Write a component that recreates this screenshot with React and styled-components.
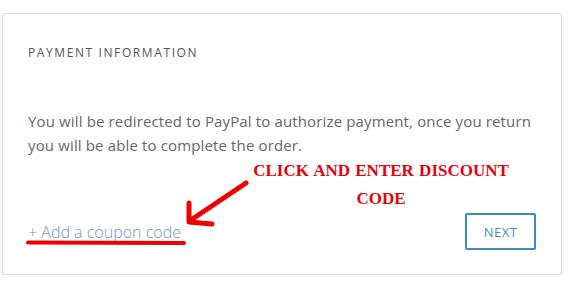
import styled, { createGlobalStyle } from 'styled-components';

const GlobalStyle = createGlobalStyle`
  html, body {
    margin: 0;
    padding: 0;
    background: #ffffff;
  }
  body {
    padding: 13px 0 0 2px;
    font-family: "Open Sans", "Liberation Sans", sans-serif;
  }
`;

const Card = styled.section`
  position: relative;
  box-sizing: border-box;
  width: 560px;
  height: 262px;
  display: flex;
  flex-direction: column;
  padding: 30px 24px 24px 25px;
  background: #fff;
  border: 1px solid #dedede;
  border-radius: 3px;
  box-shadow: 0 1px 3px rgba(0, 0, 0, 0.1);
`;

const Title = styled.h2`
  margin: 0;
  font-size: 12px;
  line-height: 18px;
  font-weight: 400;
  letter-spacing: 1.6px;
  color: #555;
  text-transform: uppercase;
`;

const Message = styled.p`
  margin: 47px 0 0;
  font-size: 15px;
  line-height: 24px;
  letter-spacing: 0.14px;
  color: #666;
`;

const Footer = styled.div`
  margin-top: auto;
  display: flex;
  align-items: center;
  justify-content: space-between;
`;

const CouponLink = styled.a`
  font-size: 16px;
  font-weight: 300;
  color: #6f95d0;
  text-decoration: none;
  cursor: pointer;
`;

const NextButton = styled.button`
  box-sizing: border-box;
  width: 71px;
  height: 37px;
  margin-right: 1px;
  background: #fff;
  border: 2px solid #3d88c9;
  border-radius: 2px;
  font-family: inherit;
  font-size: 13px;
  letter-spacing: 0.5px;
  color: #4a8bc6;
  cursor: pointer;
`;

const Annotation = styled.svg`
  position: absolute;
  left: -1px;
  top: -1px;
  pointer-events: none;
`;

const Callout = styled.div`
  position: absolute;
  left: 248px;
  top: 143px;
  width: 260px;
  text-align: center;
  font-family: "Liberation Serif", "Times New Roman", serif;
  font-weight: 700;
  font-size: 17px;
  line-height: 28px;
  word-spacing: 1px;
  color: #e8000b;
`;

export default function App() {
  return (
    <>
      <GlobalStyle />
      <Card>
        <Title>Payment Information</Title>
        <Message>
          You will be redirected to PayPal to authorize payment, once you return
          you will be able to complete the order.
        </Message>
        <Footer>
          <CouponLink>+ Add a coupon code</CouponLink>
          <NextButton>NEXT</NextButton>
        </Footer>
        <Annotation width="560" height="262" viewBox="0 0 560 262">
          <g stroke="#ee0000" strokeLinecap="round" strokeLinejoin="round" fill="none">
            <path d="M244 170 L189 207" strokeWidth="5" />
            <path d="M187 190 L187 209 L210 211" strokeWidth="5" />
            <path d="M26 229.5 L182 230" strokeWidth="4" />
          </g>
        </Annotation>
        <Callout>
          CLICK AND ENTER DISCOUNT
          <br />
          CODE
        </Callout>
      </Card>
    </>
  );
}
